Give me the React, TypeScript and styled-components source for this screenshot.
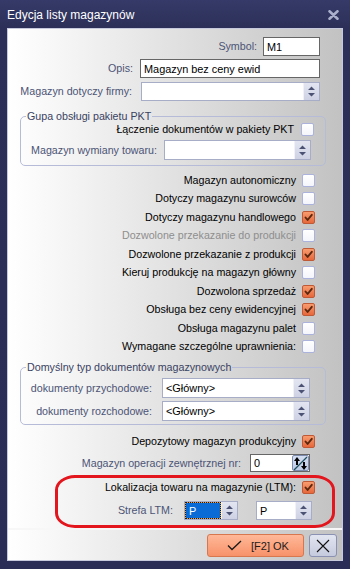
import React from "react";
import styled, { createGlobalStyle } from "styled-components";

const GlobalStyle = createGlobalStyle`
  html, body { margin: 0; padding: 0; background: #2c3058; }
  body { font-family: "Liberation Sans", Arial, sans-serif; font-size: 10.7px; }
  * { box-sizing: border-box; }
`;

const Window = styled.div`
  width: 350px;
  height: 569px;
  background: linear-gradient(#353a68, #2c3058 28px, #2a2e56);
  display: flex;
  flex-direction: column;
  overflow: hidden;
`;

const TitleBar = styled.div`
  height: 28px;
  flex: none;
  display: flex;
  align-items: center;
  justify-content: space-between;
  padding: 2px 11px 0 7px;
  color: #ffffff;
  font-size: 12px;
`;

const Client = styled.div`
  flex: 1;
  margin: 0 7px 8px 7px;
  border: 1px solid #c6c9dc;
  background: linear-gradient(to right, #ffffff 0%, #f7f7f7 14%, #c2c2c2 100%);
  display: flex;
  flex-direction: column;
`;

const Form = styled.div`
  flex: 1;
  position: relative;
  display: flex;
  flex-direction: column;
`;

const Row = styled.div<{ $mt?: number; $h: number; $pr: number; $gap?: number }>`
  display: flex;
  align-items: center;
  justify-content: flex-end;
  flex: none;
  margin-top: ${(p) => p.$mt ?? 0}px;
  height: ${(p) => p.$h}px;
  padding-right: ${(p) => p.$pr}px;
  gap: ${(p) => p.$gap ?? 6}px;
`;

const Label = styled.span<{ $tone?: "field" | "text" | "disabled" }>`
  white-space: nowrap;
  font-size: 10.7px;
  line-height: 13px;
  color: ${(p) =>
    p.$tone === "text" ? "#000000" : p.$tone === "disabled" ? "#8e8e8e" : "#4c5476"};
`;

const TextBox = styled.div<{ $w: number }>`
  width: ${(p) => p.$w}px;
  height: 100%;
  background: #ffffff;
  border: 1px solid #666666;
  display: flex;
  align-items: center;
  padding-left: 3px;
  font-size: 10.9px;
  color: #000;
`;

const Combo = styled.div<{ $w: number }>`
  width: ${(p) => p.$w}px;
  height: 100%;
  display: flex;
  border: 1px solid #a7adc6;
  background: #ffffff;
`;

const ComboText = styled.div<{ $focus?: boolean }>`
  flex: 1;
  display: flex;
  align-items: center;
  padding-left: 3px;
  font-size: 10.9px;
  color: ${(p) => (p.$focus ? "#ffffff" : "#000000")};
  background: ${(p) => (p.$focus ? "#0a6ad6" : "transparent")};
  outline: ${(p) => (p.$focus ? "1px dotted #1a1a1a" : "none")};
  outline-offset: -1px;
  ${(p) => (p.$focus ? "border: 1px solid #e8a040;" : "")}
`;

const ComboSpin = styled.div`
  width: 16px;
  flex: none;
  background: linear-gradient(#e3e6f1, #cdd1e3);
  border-left: 1px solid #f1f2f8;
  display: flex;
  align-items: center;
  justify-content: center;
`;

const Box = styled.span<{ $checked?: boolean }>`
  width: 13px;
  height: 13px;
  flex: none;
  border-radius: 2px;
  display: flex;
  align-items: center;
  justify-content: center;
  border: 1px solid ${(p) => (p.$checked ? "#c05a36" : "#abb3dc")};
  background: ${(p) =>
    p.$checked ? "linear-gradient(#f89c6e, #e6683c)" : "linear-gradient(#ffffff, #f4f5fb)"};
`;

const Group = styled.fieldset<{ $mt: number; $pb: number }>`
  margin: ${(p) => p.$mt}px 16px 0 12px;
  padding: 0 0 ${(p) => p.$pb}px 0;
  border: 1px solid #b6bcd8;
  border-radius: 5px;
  min-width: 0;
  flex: none;
`;

const Legend = styled.legend`
  margin-left: 5px;
  padding: 0 1px;
  font-size: 10.7px;
  line-height: 12px;
  color: #3a4262;
`;

const NumBox = styled.div<{ $w: number }>`
  width: ${(p) => p.$w}px;
  height: 100%;
  background: #ffffff;
  border: 1px solid #666666;
  display: flex;
  font-size: 10.9px;
`;

const NumValue = styled.div`
  flex: 1;
  display: flex;
  align-items: center;
  padding-left: 3px;
`;

const NumButton = styled.div`
  width: 17px;
  flex: none;
  background: linear-gradient(#d4def2, #bccbe6);
  border: 1px solid #7d8bae;
  border-radius: 2px;
  display: flex;
  align-items: center;
  justify-content: center;
`;

const Pair = styled.div`
  display: flex;
  height: 100%;
  gap: 18px;
  margin-left: 5px;
`;

const Annotation = styled.div`
  position: absolute;
  left: 47px;
  top: 446px;
  width: 280px;
  height: 53px;
  border: 3px solid #e3151d;
  border-radius: 20px / 15px;
  pointer-events: none;
  z-index: 2;
`;

const Footer = styled.div`
  height: 32px;
  flex: none;
  border-top: 2px solid #f7f7f7;
  display: flex;
  justify-content: flex-end;
  align-items: flex-start;
  padding: 4px 5px 0 0;
  gap: 5px;
`;

const OkButton = styled.div`
  width: 97px;
  height: 23px;
  border: 1px solid #d7774f;
  border-radius: 3px;
  background: linear-gradient(#ffb898, #f7926a);
  display: flex;
  align-items: center;
  justify-content: center;
  gap: 9px;
  padding-left: 5px;
  font-size: 11px;
  color: #1c1c1c;
`;

const CloseButton = styled.div`
  width: 28px;
  height: 23px;
  border: 1px solid #8a91b2;
  border-radius: 3px;
  background: linear-gradient(#e2e5f1, #c5cadd);
  display: flex;
  align-items: center;
  justify-content: center;
`;

const Spin = () => (
  <svg width="7" height="11" viewBox="0 0 7 11">
    <path d="M0 4 L3.5 0.5 L7 4 Z M0 7 L3.5 10.5 L7 7 Z" fill="#4b5274" />
  </svg>
);

const Check = () => (
  <svg width="11" height="11" viewBox="0 0 11 11">
    <path d="M2.5 5.5 L4.6 8 L8.8 2.8" fill="none" stroke="#5a2810" strokeWidth="1.9" strokeLinecap="round" strokeLinejoin="round" />
  </svg>
);

const CheckBox = ({ checked }: { checked?: boolean }) => (
  <Box $checked={checked}>{checked ? <Check /> : null}</Box>
);

const ComboBox = ({ w, value, focus }: { w: number; value?: string; focus?: boolean }) => (
  <Combo $w={w}>
    <ComboText $focus={focus}>{value}</ComboText>
    <ComboSpin>
      <Spin />
    </ComboSpin>
  </Combo>
);

type CheckRow = { label: string; checked?: boolean; disabled?: boolean };

const checks: CheckRow[] = [
  { label: "Magazyn autonomiczny" },
  { label: "Dotyczy magazynu surowców" },
  { label: "Dotyczy magazynu handlowego", checked: true },
  { label: "Dozwolone przekazanie do produkcji", disabled: true },
  { label: "Dozwolone przekazanie z produkcji", checked: true },
  { label: "Kieruj produkcję na magazyn główny" },
  { label: "Dozwolona sprzedaż", checked: true },
  { label: "Obsługa bez ceny ewidencyjnej", checked: true },
  { label: "Obsługa magazynu palet" },
  { label: "Wymagane szczególne uprawnienia:" },
];

export default function App() {
  return (
    <>
      <GlobalStyle />
      <Window>
        <TitleBar>
          <span>Edycja listy magazynów</span>
          <svg width="11" height="10" viewBox="0 0 11 10">
            <path d="M1.5 1.3 L9.5 8.7 M9.5 1.3 L1.5 8.7" stroke="#aab0cc" strokeWidth="2.6" strokeLinecap="round" />
          </svg>
        </TitleBar>
        <Client>
          <Form>
            <Row $mt={8} $h={19} $pr={22} $gap={6}>
              <Label>Symbol:</Label>
              <TextBox $w={57}>M1</TextBox>
            </Row>
            <Row $mt={3} $h={19} $pr={22} $gap={7}>
              <Label>Opis:</Label>
              <TextBox $w={180}>Magazyn bez ceny ewid</TextBox>
            </Row>
            <Row $mt={4} $h={19} $pr={22} $gap={9}>
              <Label>Magazyn dotyczy firmy:</Label>
              <ComboBox w={179} />
            </Row>

            <Group $mt={9} $pb={5}>
              <Legend>Gupa obsługi pakietu PKT</Legend>
              <Row $h={15} $pr={11} $gap={7}>
                <Label $tone="text">Łączenie dokumentów w pakiety PKT</Label>
                <CheckBox />
              </Row>
              <Row $mt={3} $h={20} $pr={14} $gap={7}>
                <Label>Magazyn wymiany towaru:</Label>
                <ComboBox w={147} />
              </Row>
            </Group>

            {checks.map((c, i) => (
              <Row key={c.label} $mt={i === 0 ? 5 : 0} $h={18.5} $pr={27} $gap={6}>
                <Label $tone={c.disabled ? "disabled" : "text"}>{c.label}</Label>
                <CheckBox checked={c.checked} />
              </Row>
            ))}

            <Group $mt={5} $pb={3}>
              <Legend>Domyślny typ dokumentów magazynowych</Legend>
              <Row $mt={5} $h={20} $pr={15} $gap={10}>
                <Label>dokumenty przychodowe:</Label>
                <ComboBox w={148} value="<Główny>" />
              </Row>
              <Row $mt={3} $h={20} $pr={15} $gap={10}>
                <Label>dokumenty rozchodowe:</Label>
                <ComboBox w={148} value="<Główny>" />
              </Row>
            </Group>

            <Row $mt={7} $h={18} $pr={27} $gap={6}>
              <Label $tone="text">Depozytowy magazyn produkcyjny</Label>
              <CheckBox checked />
            </Row>
            <Row $mt={4} $h={18} $pr={32} $gap={9}>
              <Label>Magazyn operacji zewnętrznej nr:</Label>
              <NumBox $w={60}>
                <NumValue>0</NumValue>
                <NumButton>
                  <svg width="15" height="15" viewBox="0 0 15 15">
                    <path d="M14 1 L1 14" stroke="#1d4f5c" strokeWidth="1.3" />
                    <path d="M4 3 V9" stroke="#000" strokeWidth="2" />
                    <path d="M1 5 L4 1 L7 5 Z" fill="#000" />
                    <path d="M11 6 V12" stroke="#000" strokeWidth="2" />
                    <path d="M8 10 L11 14 L14 10 Z" fill="#000" />
                  </svg>
                </NumButton>
              </NumBox>
            </Row>
            <Row $mt={6} $h={18} $pr={27} $gap={6}>
              <Label $tone="text">Lokalizacja towaru na magazynie (LTM):</Label>
              <CheckBox checked />
            </Row>
            <Row $mt={5} $h={19} $pr={30} $gap={6}>
              <Label>Strefa LTM:</Label>
              <Pair>
                <ComboBox w={54} value="P" focus />
                <ComboBox w={56} value="P" />
              </Pair>
            </Row>

            <Annotation />
          </Form>
          <Footer>
            <OkButton>
              <svg width="15" height="11" viewBox="0 0 15 11">
                <path d="M1 5.5 L5 9.5 L14 1" fill="none" stroke="#1a1a1a" strokeWidth="1.3" />
              </svg>
              <span>[F2] OK</span>
            </OkButton>
            <CloseButton>
              <svg width="14" height="14" viewBox="0 0 14 14">
                <path d="M1 1 L13 13 M13 1 L1 13" stroke="#111" strokeWidth="1.1" />
              </svg>
            </CloseButton>
          </Footer>
        </Client>
      </Window>
    </>
  );
}
